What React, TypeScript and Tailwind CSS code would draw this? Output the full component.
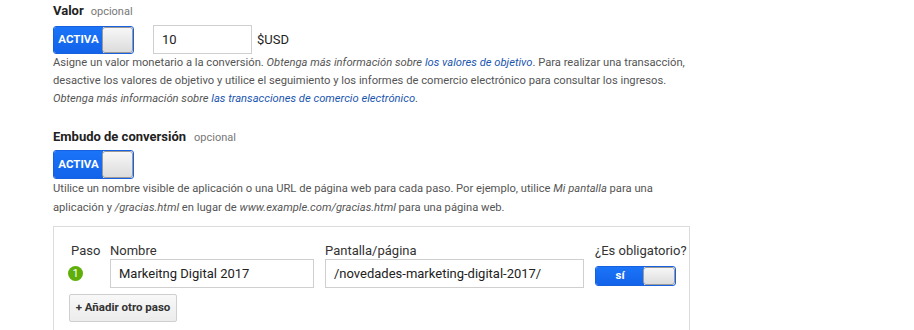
import React from "react";

function Toggle({ label, h, blueW, knobW }: { label: string; h: string; blueW: string; knobW: string }) {
  return (
    <div className={`flex ${h} rounded-[3px] overflow-hidden border border-[#1760e0]`}>
      <div className={`${blueW} h-full flex items-center justify-center bg-gradient-to-b from-[#1b74f7] to-[#1263ea] text-white font-bold text-[11.5px] leading-none`}>
        {label}
      </div>
      <div className={`${knobW} h-full bg-gradient-to-b from-[#f7f7f7] to-[#dcdcdc] border border-[#9a9a9a] rounded-[3px] -ml-px`} />
    </div>
  );
}

export default function App() {
  return (
    <div
      className="w-[914px] h-[330px] overflow-hidden bg-white pl-[53px] pt-[3px] text-[#555]"
      style={{ fontFamily: "Roboto, 'Liberation Sans', sans-serif" }}
    >
      {/* Valor */}
      <div className="flex items-baseline gap-[7px] h-[16px] leading-[16px]">
        <span className="text-[13px] font-bold text-[#222]">Valor</span>
        <span className="text-[11px] text-[#777]">opcional</span>
      </div>
      <div className="flex items-center mt-[6px] h-[29px]">
        <Toggle label="ACTIVA" h="h-[28px]" blueW="w-[49px]" knobW="w-[31px]" />
        <div className="ml-[19px] w-[99px] h-[29px] border border-[#cfcfcf] flex items-center pl-[8px] text-[13px] text-[#222]">
          10
        </div>
        <span className="ml-[5px] text-[13px] text-[#222]">$USD</span>
      </div>
      <p className="text-[11.2px] leading-[18px] whitespace-nowrap mt-0">
        Asigne un valor monetario a la conversión. <i>Obtenga más información sobre </i>
        <i className="text-[#1a56b0]">los valores de objetivo</i>. Para realizar una transacción,
        <br />
        desactive los valores de objetivo y utilice el seguimiento y los informes de comercio electrónico para consultar los ingresos.
        <br />
        <i>Obtenga más información sobre </i>
        <i className="text-[#1a56b0]">las transacciones de comercio electrónico</i>.
      </p>

      {/* Embudo */}
      <div className="flex items-baseline gap-[8px] h-[16px] leading-[16px] mt-[21px]">
        <span className="text-[13px] font-bold text-[#222]">Embudo de conversión</span>
        <span className="text-[11px] text-[#777]">opcional</span>
      </div>
      <div className="mt-[5px] flex">
        <Toggle label="ACTIVA" h="h-[29px]" blueW="w-[49px]" knobW="w-[31px]" />
      </div>
      <p className="text-[11.2px] leading-[19px] whitespace-nowrap">
        Utilice un nombre visible de aplicación o una URL de página web para cada paso. Por ejemplo, utilice <i>Mi pantalla</i> para una
        <br />
        aplicación y <i>/gracias.html</i> en lugar de <i>www.example.com/gracias.html</i> para una página web.
      </p>

      {/* Box */}
      <div className="mt-[9px] w-[637px] h-[200px] border border-[#dcdcdc] pt-[16px] pl-[15px]">
        <div className="grid grid-cols-[41px_215px_270px_auto] text-[13px] text-[#333] leading-[16px]">
          <div className="pl-[2px]">Paso</div>
          <div>Nombre</div>
          <div>Pantalla/página</div>
          <div>¿Es obligatorio?</div>

          <div className="h-[29px] flex items-center">
            <div className="w-[15px] h-[15px] rounded-full bg-[#5fae0a] text-white text-[11px] leading-none flex items-center justify-center -ml-px">
              1
            </div>
          </div>
          <div>
            <div className="w-[204px] h-[29px] border border-[#cfcfcf] flex items-center pl-[8px] text-[13px] text-[#222]">
              Markeitng Digital 2017
            </div>
          </div>
          <div>
            <div className="w-[259px] h-[29px] border border-[#cfcfcf] flex items-center pl-[8px] text-[13px] text-[#222]">
              /novedades-marketing-digital-2017/
            </div>
          </div>
          <div className="pt-[7px] flex">
            <Toggle label="sí" h="h-[20px]" blueW="w-[48px]" knobW="w-[32px]" />
          </div>
        </div>
        <button className="mt-[6px] h-[28px] w-[108px] border border-[#cfcfcf] rounded-[2px] bg-gradient-to-b from-[#f8f8f8] to-[#ececec] text-[11.5px] font-bold text-[#333] flex items-center justify-center">
          + Añadir otro paso
        </button>
      </div>
    </div>
  );
}
